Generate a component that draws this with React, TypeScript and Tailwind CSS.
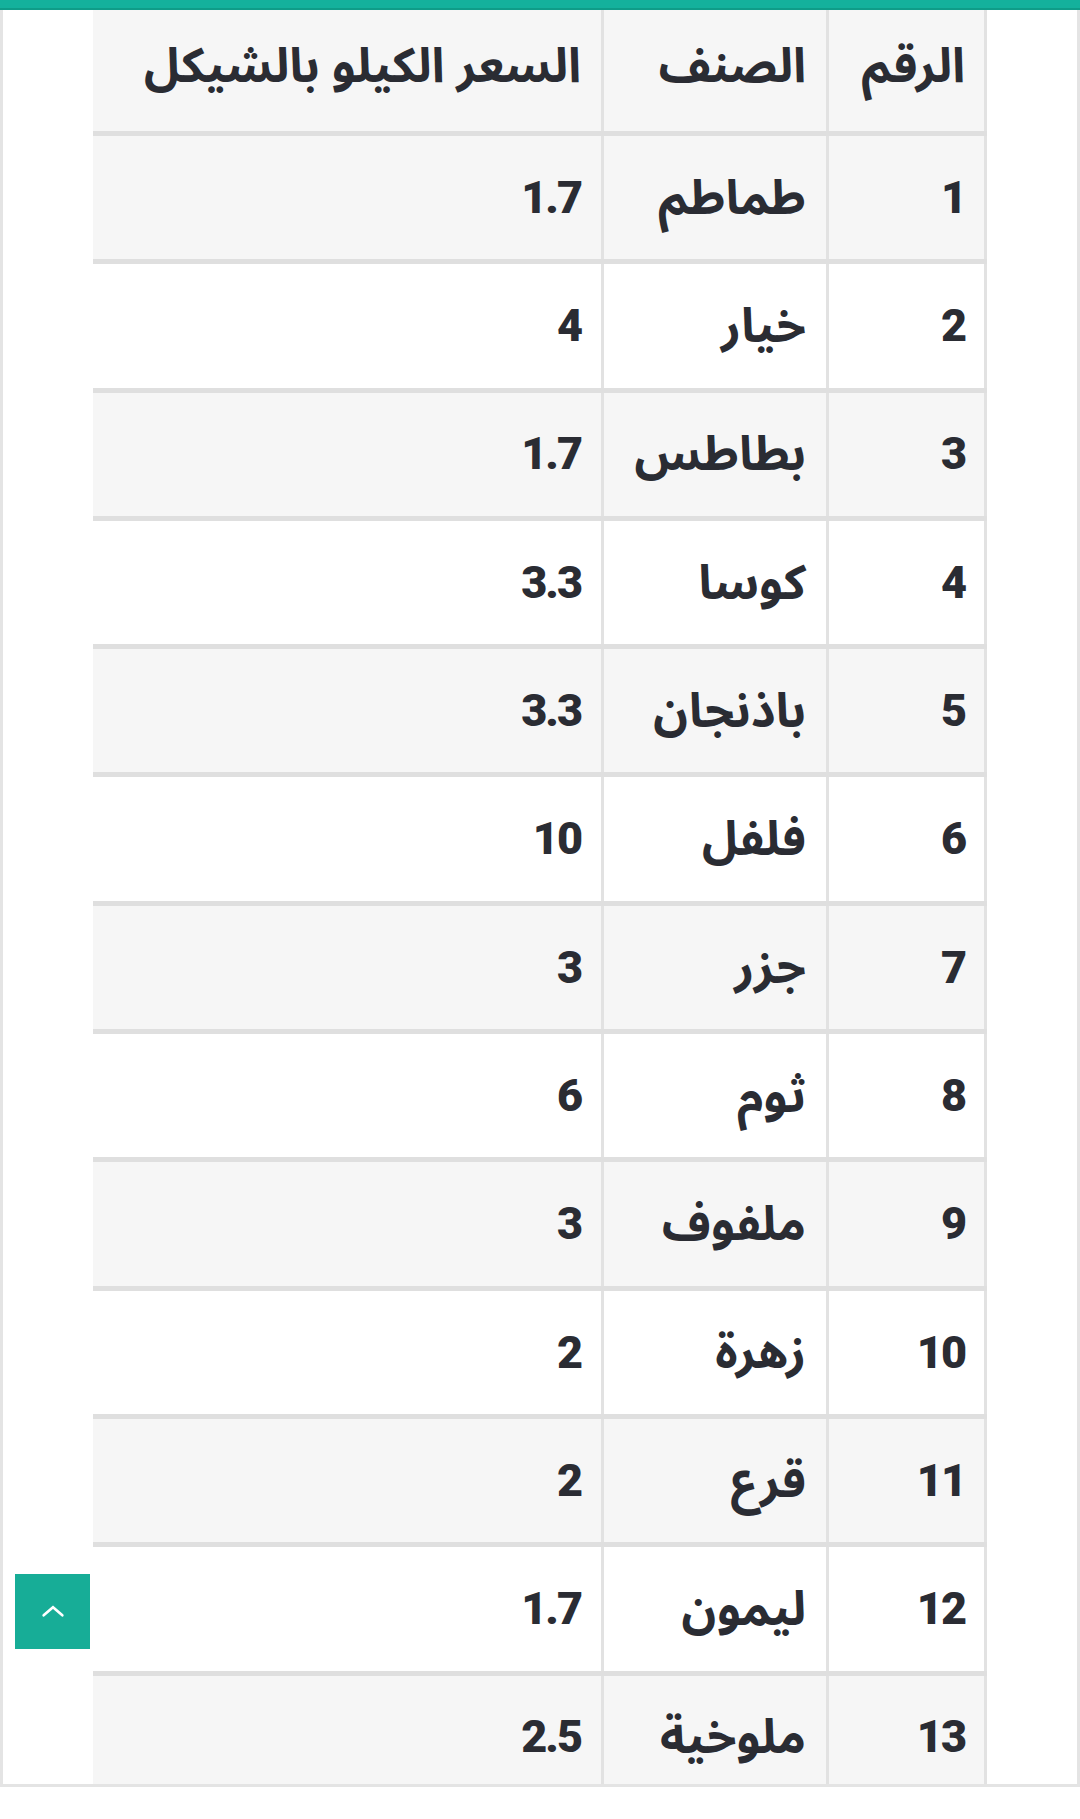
import React from 'react';

const rows: [string, string, string][] = [
  ['1', 'طماطم', '1.7'],
  ['2', 'خيار', '4'],
  ['3', 'بطاطس', '1.7'],
  ['4', 'كوسا', '3.3'],
  ['5', 'باذنجان', '3.3'],
  ['6', 'فلفل', '10'],
  ['7', 'جزر', '3'],
  ['8', 'ثوم', '6'],
  ['9', 'ملفوف', '3'],
  ['10', 'زهرة', '2'],
  ['11', 'قرع', '2'],
  ['12', 'ليمون', '1.7'],
  ['13', 'ملوخية', '2.5'],
];

const Row = ({ cells, striped, header = false }: { cells: [string, string, string]; striped: boolean; header?: boolean }) => {
  const bg = striped ? 'bg-[#f6f6f6]' : 'bg-white';
  // arabic glyphs run smaller than the digits at the same size
  const num = header ? 'text-[48px] font-bold pb-[10px]' : 'text-[45px] font-black tracking-[-2px]';
  return (
    <div
      className={`grid grid-cols-[161px_225px_1fr] border-b-[5px] border-[#dfdfdf] ${bg} ${header ? 'h-[126px]' : 'h-[128.3px]'}`}
    >
      <div className={`flex items-center border-x-[3px] border-[#e2e2e2] pr-[19px] ${num}`}>{cells[0]}</div>
      <div className={`flex items-center border-l-[3px] border-[#e2e2e2] pr-[20px] text-[48px] font-bold ${header ? 'pb-[10px]' : ''}`}>
        {cells[1]}
      </div>
      <div className={`flex items-center pr-[20px] ${num}`}>{cells[2]}</div>
    </div>
  );
};

const App = () => {
  return (
    <div className="min-h-[1819px] w-[1080px] bg-white font-['Roboto','Noto_Sans_Arabic','DejaVu_Sans',sans-serif] text-[#2a2c33]">
      <div className="h-[10px] border-b-2 border-[#0f9c88] bg-[#14b19c]" />

      <div className="h-[1777px] overflow-hidden border-x-[3px] border-b-[3px] border-[#e4e4e4] pl-[90px] pr-[90px]">
        <div dir="rtl">
          <Row cells={['الرقم', 'الصنف', 'السعر الكيلو بالشيكل']} striped header />
          {rows.map((r, i) => (
            <Row key={r[0]} cells={r} striped={i % 2 === 0} />
          ))}
        </div>
      </div>

      <button className="absolute left-[15px] top-[1574px] flex h-[75px] w-[75px] items-center justify-center bg-[#17ad97]">
        <svg viewBox="0 0 24 24" className="h-[32px] w-[32px]" fill="none" stroke="white" strokeWidth={2} strokeLinecap="round">
          <path d="M5 14.5l7-6 7 6" />
        </svg>
      </button>
    </div>
  );
};

export default App;
